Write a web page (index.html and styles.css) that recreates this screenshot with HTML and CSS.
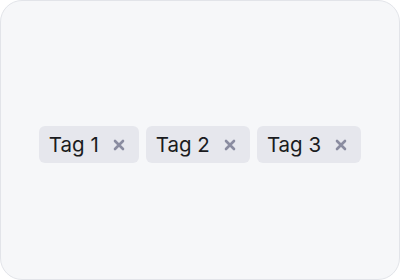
FILE: index.html
```html
<!DOCTYPE html>
<html>
<head>
<meta charset="utf-8">
<link rel="stylesheet" href="styles.css">
</head>
<body>
<div class="card">
  <div class="tags">
    <span class="tag">Tag 1<button class="remove" aria-label="Remove Tag 1"><svg viewBox="0 0 12 12" width="12" height="12"><path d="M2 2L10 10M10 2L2 10" stroke="currentColor" stroke-width="2.6" stroke-linecap="round"/></svg></button></span>
    <span class="tag">Tag 2<button class="remove" aria-label="Remove Tag 2"><svg viewBox="0 0 12 12" width="12" height="12"><path d="M2 2L10 10M10 2L2 10" stroke="currentColor" stroke-width="2.6" stroke-linecap="round"/></svg></button></span>
    <span class="tag">Tag 3<button class="remove" aria-label="Remove Tag 3"><svg viewBox="0 0 12 12" width="12" height="12"><path d="M2 2L10 10M10 2L2 10" stroke="currentColor" stroke-width="2.6" stroke-linecap="round"/></svg></button></span>
  </div>
</div>
</body>
</html>
```
FILE: styles.css
```css
html, body {
  margin: 0;
  padding: 0;
  background: #ffffff;
}
.card {
  box-sizing: border-box;
  width: 400px;
  height: 280px;
  padding-top: 9px;
  border: 1px solid #e2e4e9;
  border-radius: 22px;
  background: #f6f7f9;
  display: flex;
  align-items: center;
  justify-content: center;
  font-family: Inter, "Noto Sans", sans-serif;
}
.tags {
  display: flex;
  gap: 7px;
}
.tag {
  display: inline-flex;
  align-items: center;
  height: 37px;
  padding: 0 10px 0 10px;
  background: #e6e7ed;
  border-radius: 6px;
  font-size: 20.5px;
  color: #1a1b20;
  box-sizing: border-box;
}
.remove {
  display: inline-flex;
  align-items: center;
  justify-content: center;
  border: 0;
  background: transparent;
  padding: 0;
  margin-left: 10px;
  width: 20px;
  height: 20px;
  color: #8a8ca0;
}
```
